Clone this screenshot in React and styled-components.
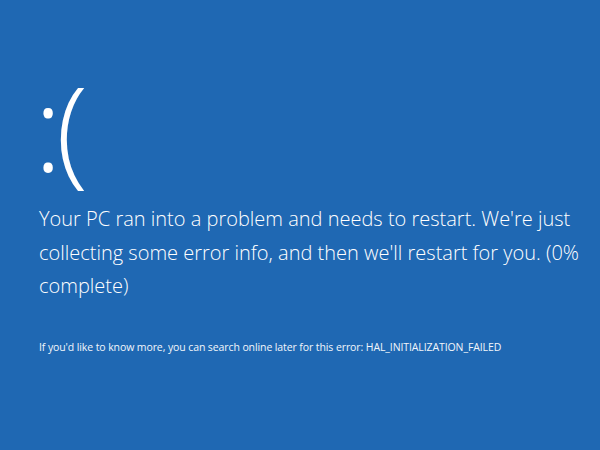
import React from 'react';
import styled, { createGlobalStyle } from 'styled-components';

const Global = createGlobalStyle`
    html, body {
        margin: 0;
        padding: 0;
        background: #1f68b3;
    }
`;

const Screen = styled.div`
    width: 600px;
    height: 450px;
    box-sizing: border-box;
    background: #1f68b3;
    color: #ffffff;
    font-family: "Open Sans", "Noto Sans", sans-serif;
    font-weight: 300;
    padding: 62px 20px 0 32px;
    overflow: hidden;
`;

const Face = styled.div`
    font-size: 118px;
    line-height: 130px;
    height: 130px;
    letter-spacing: -6px;
    margin-left: 2px;
`;

const Message = styled.p`
    margin: 10px 0 0 7px;
    font-size: 20px;
    line-height: 33.5px;
    letter-spacing: 0;
`;

const Detail = styled.p`
    margin: 36px 0 0 7px;
    font-size: 10.5px;
    line-height: 16px;
    font-weight: 400;
    letter-spacing: -0.1px;
    color: #f2f6fb;
`;

const App = () => {
    return (
        <Screen>
            <Global />
            <Face>:(</Face>
            <Message>
                Your PC ran into a problem and needs to restart. We're just collecting some error info, and then we'll restart for you. (0% complete)
            </Message>
            <Detail>
                If you'd like to know more, you can search online later for this error: HAL_INITIALIZATION_FAILED
            </Detail>
        </Screen>
    );
};

export default App;
